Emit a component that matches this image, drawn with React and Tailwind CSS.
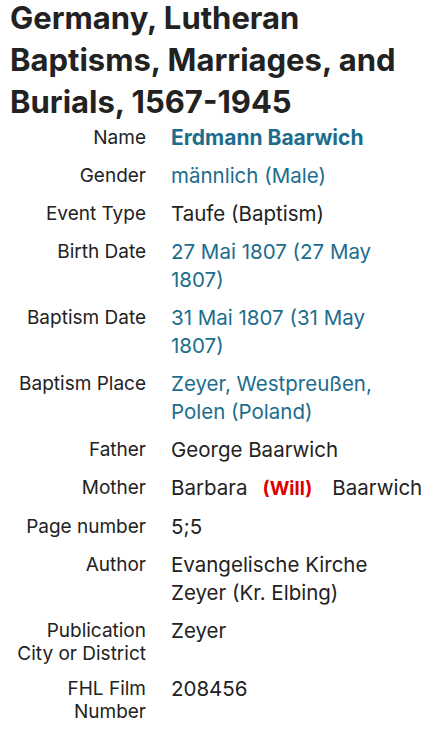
const rows = [
  { label: "Name", value: "Erdmann Baarwich", link: true, bold: true },
  { label: "Gender", value: "männlich (Male)", link: true },
  { label: "Event Type", value: "Taufe (Baptism)" },
  { label: "Birth Date", value: "27 Mai 1807 (27 May 1807)", link: true },
  { label: "Baptism Date", value: "31 Mai 1807 (31 May 1807)", link: true },
  { label: "Baptism Place", value: "Zeyer, Westpreußen, Polen (Poland)", link: true },
  { label: "Father", value: "George Baarwich" },
  { label: "Mother", mother: true },
  { label: "Page number", value: "5;5" },
  { label: "Author", value: "Evangelische Kirche Zeyer (Kr. Elbing)" },
  { label: "Publication City or District", value: "Zeyer" },
  { label: "FHL Film Number", value: "208456" },
];

export default function App() {
  return (
    <div
      className="min-h-screen bg-white text-[#222222] pl-[10px] pr-[28px]"
      style={{ fontFamily: "Inter, 'Liberation Sans', sans-serif" }}
    >
      {/* Title */}
      <h1 className="text-[31px] leading-[42px] font-bold -mt-[3px] pr-4">
        Germany, Lutheran Baptisms, Marriages, and Burials, 1567-1945
      </h1>

      {/* Details */}
      <div className="grid grid-cols-[136px_1fr] gap-x-[25px] gap-y-[10px] mt-[1px]">
        {rows.map((row) => (
          <div key={row.label} className="contents">
            <div className="text-right text-[19px] leading-[23px] pt-[2px]">
              {row.label}
            </div>
            <div className="text-[20.5px] leading-[28px]">
              {row.mother ? (
                <span className="whitespace-nowrap">
                  Barbara
                  <span className="text-[#e00000] font-bold text-[19px] ml-[15px] mr-[20px]">
                    (Will)
                  </span>
                  Baarwich
                </span>
              ) : (
                <span
                  className={
                    (row.link ? "text-[#1c6d8d] " : "") +
                    (row.bold ? "font-bold text-[21px]" : "")
                  }
                >
                  {row.value}
                </span>
              )}
            </div>
          </div>
        ))}
      </div>
    </div>
  );
}
